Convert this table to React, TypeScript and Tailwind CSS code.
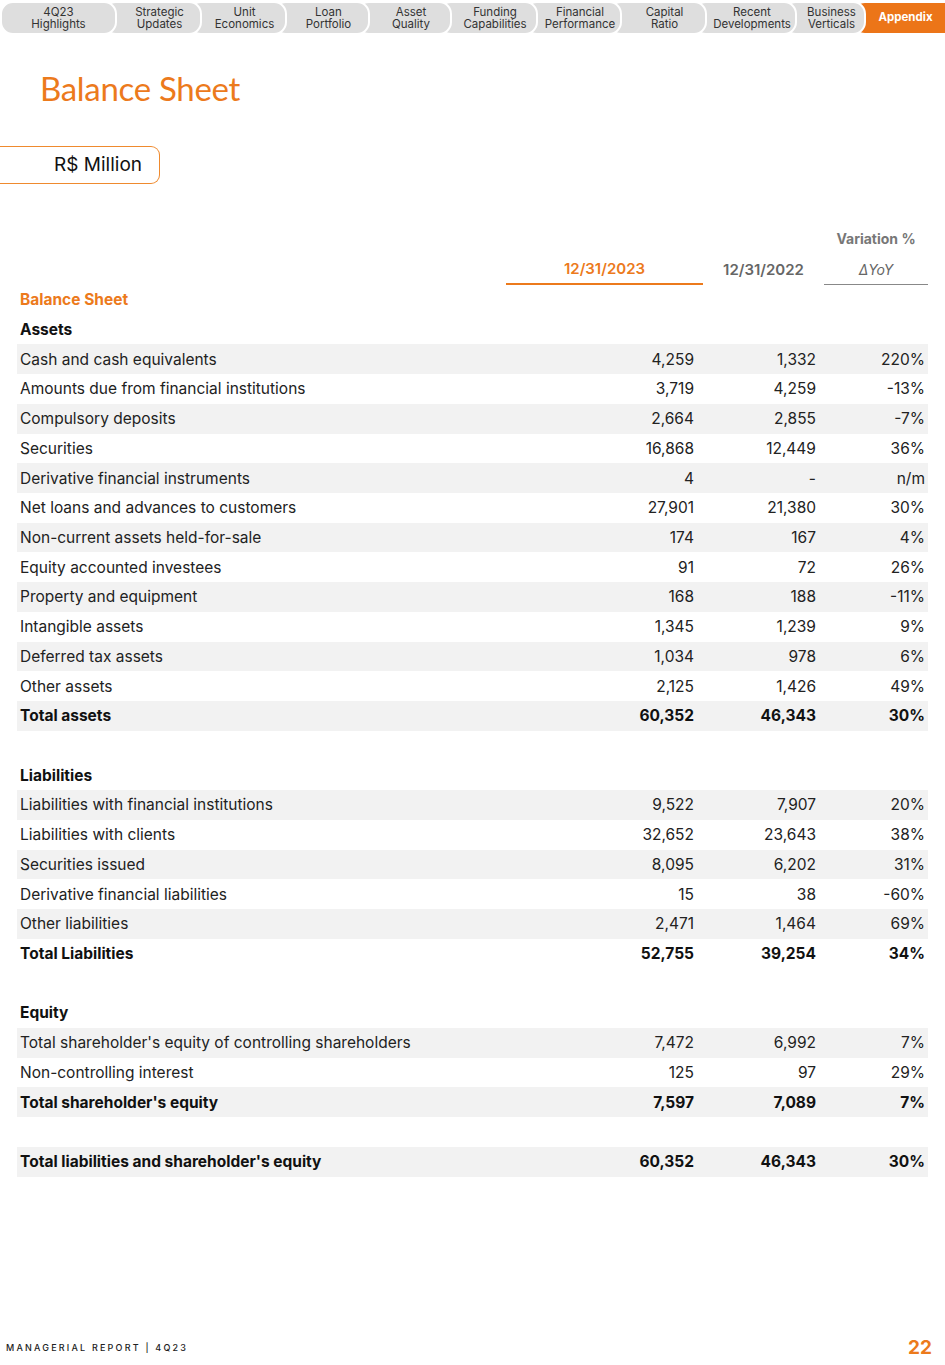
import React from 'react';

type Row = {
    label: string;
    a?: string;
    b?: string;
    c?: string;
    kind?: 'section' | 'head' | 'total' | 'blank';
    shade?: boolean;
};

const tabs = [
    { l1: '4Q23', l2: 'Highlights', w: 'w-[117px]', z: 'z-[11]' },
    { l1: 'Strategic', l2: 'Updates', w: 'w-[99px]', z: 'z-[10]' },
    { l1: 'Unit', l2: 'Economics', w: 'w-[99px]', z: 'z-[9]' },
    { l1: 'Loan', l2: 'Portfolio', w: 'w-[97px]', z: 'z-[8]' },
    { l1: 'Asset', l2: 'Quality', w: 'w-[96px]', z: 'z-[7]' },
    { l1: 'Funding', l2: 'Capabilities', w: 'w-[100px]', z: 'z-[6]' },
    { l1: 'Financial', l2: 'Performance', w: 'w-[98px]', z: 'z-[5]' },
    { l1: 'Capital', l2: 'Ratio', w: 'w-[99px]', z: 'z-[4]' },
    { l1: 'Recent', l2: 'Developments', w: 'w-[104px]', z: 'z-[3]' },
    { l1: 'Business', l2: 'Verticals', w: 'w-[83px]', z: 'z-[2]' },
];

const rows: Row[] = [
    { label: 'Balance Sheet', kind: 'section' },
    { label: 'Assets', kind: 'head' },
    { label: 'Cash and cash equivalents', a: '4,259', b: '1,332', c: '220%', shade: true },
    { label: 'Amounts due from financial institutions', a: '3,719', b: '4,259', c: '-13%' },
    { label: 'Compulsory deposits', a: '2,664', b: '2,855', c: '-7%', shade: true },
    { label: 'Securities', a: '16,868', b: '12,449', c: '36%' },
    { label: 'Derivative financial instruments', a: '4', b: '-', c: 'n/m', shade: true },
    { label: 'Net loans and advances to customers', a: '27,901', b: '21,380', c: '30%' },
    { label: 'Non-current assets held-for-sale', a: '174', b: '167', c: '4%', shade: true },
    { label: 'Equity accounted investees', a: '91', b: '72', c: '26%' },
    { label: 'Property and equipment', a: '168', b: '188', c: '-11%', shade: true },
    { label: 'Intangible assets', a: '1,345', b: '1,239', c: '9%' },
    { label: 'Deferred tax assets', a: '1,034', b: '978', c: '6%', shade: true },
    { label: 'Other assets', a: '2,125', b: '1,426', c: '49%' },
    { label: 'Total assets', a: '60,352', b: '46,343', c: '30%', kind: 'total', shade: true },
    { label: '', kind: 'blank' },
    { label: 'Liabilities', kind: 'head' },
    { label: 'Liabilities with financial institutions', a: '9,522', b: '7,907', c: '20%', shade: true },
    { label: 'Liabilities with clients', a: '32,652', b: '23,643', c: '38%' },
    { label: 'Securities issued', a: '8,095', b: '6,202', c: '31%', shade: true },
    { label: 'Derivative financial liabilities', a: '15', b: '38', c: '-60%' },
    { label: 'Other liabilities', a: '2,471', b: '1,464', c: '69%', shade: true },
    { label: 'Total Liabilities', a: '52,755', b: '39,254', c: '34%', kind: 'total' },
    { label: '', kind: 'blank' },
    { label: 'Equity', kind: 'head' },
    { label: "Total shareholder's equity of controlling shareholders", a: '7,472', b: '6,992', c: '7%', shade: true },
    { label: 'Non-controlling interest', a: '125', b: '97', c: '29%' },
    { label: "Total shareholder's equity", a: '7,597', b: '7,089', c: '7%', kind: 'total', shade: true },
    { label: '', kind: 'blank' },
    { label: "Total liabilities and shareholder's equity", a: '60,352', b: '46,343', c: '30%', kind: 'total', shade: true },
];

const App = () => {
    return (
        <div className="min-h-[1365px] flex flex-col bg-white font-['Inter',sans-serif] text-[#222]">
            {/* TAB BAR START */}
            <div className="flex h-[36px] pt-[1px]">
                {tabs.map((t, i) => (
                    <div
                        key={t.l1}
                        className={`relative ${t.z} ${t.w} ${i === 0 ? '' : '-ml-[14px] pl-[14px]'} shrink-0 h-[34px] flex flex-col justify-center items-center rounded-[13px] bg-[#dedede] border-2 border-white text-[11.5px] leading-[12.5px] text-[#333]`}
                    >
                        <span>{t.l1}</span>
                        <span>{t.l2}</span>
                    </div>
                ))}
                <div className="relative z-[1] flex-1 -ml-[14px] pl-[14px] -mr-[14px] h-[34px] flex items-center justify-center rounded-[13px] bg-[#ec7518] border-2 border-white text-[11.5px] font-bold text-white">
                    <span className="-ml-[14px]">Appendix</span>
                </div>
            </div>
            {/* TAB BAR END */}

            <h1 className="mt-[32px] ml-[40px] font-['Lato',sans-serif] text-[33px] leading-[40px] text-[#ec7a1c] tracking-[-0.3px]">Balance Sheet</h1>

            <div className="mt-[38px] w-[160px] h-[38px] flex items-center justify-end pr-[17px] border-[1.5px] border-l-0 border-[#ef8a2e] rounded-r-[9px] text-[19px] text-[#111]">
                R$ Million
            </div>

            {/* TABLE START */}
            <div className="mt-[41px] ml-[17px] w-[911px] flex flex-col">
                <div className="flex h-[30px] items-end">
                    <div className="flex-1" />
                    <div className="w-[104px] text-center text-[14px] font-bold text-[#777] pb-[6px]">Variation %</div>
                </div>
                <div className="flex h-[30px] items-stretch">
                    <div className="flex-1" />
                    <div className="w-[197px] flex items-center justify-center border-b-2 border-[#ec7a1c] text-[15px] font-semibold text-[#ec7a1c]">12/31/2023</div>
                    <div className="w-[121px] flex items-center justify-center text-[15px] font-semibold text-[#666]">12/31/2022</div>
                    <div className="w-[104px] flex items-center justify-center border-b-[1.5px] border-[#888] text-[14px] italic text-[#666]">ΔYoY</div>
                </div>
                {rows.map((r, i) => {
                    const bold = r.kind === 'total' || r.kind === 'head' || r.kind === 'section';
                    return (
                        <div
                            key={i}
                            className={`flex h-[29.72px] items-center text-[15.5px] ${r.shade ? 'bg-[#f2f2f2]' : ''} ${bold ? 'font-bold text-[#111]' : ''} ${r.kind === 'section' ? 'text-[#ec7a1c]' : ''}`}
                        >
                            <div className="flex-1 pl-[3px] whitespace-nowrap">{r.label}</div>
                            <div className="w-[197px] text-right pr-[9px]">{r.a}</div>
                            <div className="w-[121px] text-right pr-[8px]">{r.b}</div>
                            <div className="w-[104px] text-right pr-[3px]">{r.c}</div>
                        </div>
                    );
                })}
            </div>
            {/* TABLE END */}

            {/* FOOTER START */}
            <div className="mt-auto h-[30px] flex items-center justify-between pl-[6px] pr-[13px] pb-[4px]">
                <span className="text-[9px] font-medium tracking-[2.2px] text-[#222]">MANAGERIAL REPORT | 4Q23</span>
                <span className="text-[19px] font-bold text-[#ec7a1c]">22</span>
            </div>
            {/* FOOTER END */}
        </div>
    );
};

export default App;
